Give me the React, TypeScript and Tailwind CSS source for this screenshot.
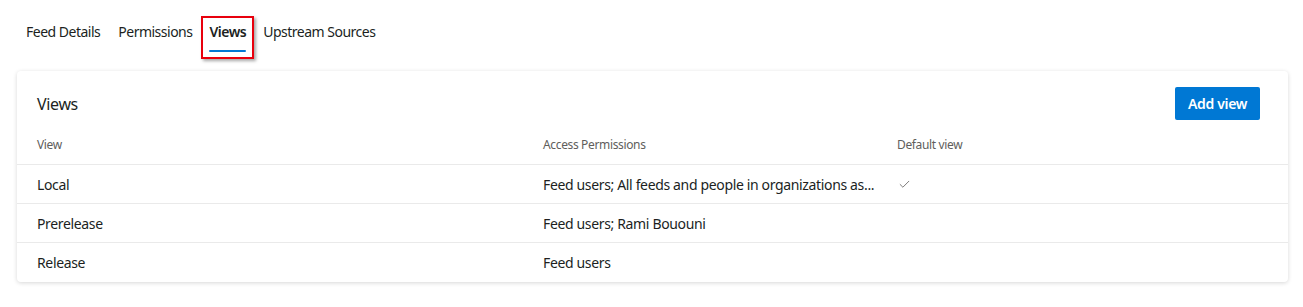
import { Check } from "lucide-react";

type Row = {
  name: string;
  access: string;
  isDefault: boolean;
};

const rows: Row[] = [
  {
    name: "Local",
    access: "Feed users; All feeds and people in organizations as...",
    isDefault: true,
  },
  { name: "Prerelease", access: "Feed users; Rami Bououni", isDefault: false },
  { name: "Release", access: "Feed users", isDefault: false },
];

const tabs = ["Feed Details", "Permissions", "Views", "Upstream Sources"];

export default function App() {
  return (
    <div className="w-[1303px] h-[307px] bg-white text-[#201f1e] font-['Segoe_UI','Noto_Sans',sans-serif] tracking-[-0.35px] antialiased">
      {/* TABS */}
      <div className="flex items-start pl-[26px] pt-[22px] h-[71px] tracking-[-0.5px]">
        {tabs.map((tab) => {
          const isActive = tab === "Views";
          return isActive ? (
            <div
              key={tab}
              className="mr-[9px] -ml-[9px] -mt-[6px] px-[6px] pt-[4px] pb-[5px] border-2 border-[#e8000d] shadow-[2px_2px_3px_rgba(0,0,0,0.35)]"
            >
              <div className="text-[14px] font-semibold leading-[20px]">{tab}</div>
              <div className="mt-[8px] h-[2px] bg-[#0078d4] rounded-full" />
            </div>
          ) : (
            <div key={tab} className="mr-[18px] text-[14px] leading-[20px]">
              {tab}
            </div>
          );
        })}
      </div>

      {/* CARD */}
      <div className="mx-[17px] w-[1271px] bg-white rounded-[4px] shadow-[0_1px_4px_rgba(0,0,0,0.16)]">
        <div className="flex items-center justify-between pl-[20px] pr-[28px] pt-[16px]">
          <h2 className="text-[16px] leading-[32px]">Views</h2>
          <button className="h-[33px] w-[85px] rounded-[2px] bg-[#0078d4] text-white text-[14px] font-semibold">
            Add view
          </button>
        </div>

        {/* TABLE HEADER */}
        <div className="flex items-center h-[45px] pt-[5px] text-[12px] text-[#605e5c] border-b border-[#eaeaea]">
          <div className="w-[526px] pl-[20px]">View</div>
          <div className="w-[354px]">Access Permissions</div>
          <div>Default view</div>
        </div>

        {/* ROWS */}
        {rows.map((row, i) => (
          <div
            key={row.name}
            className={`flex items-center h-[39px] text-[14px] ${
              i < rows.length - 1 ? "border-b border-[#eaeaea]" : ""
            }`}
          >
            <div className="w-[526px] pl-[20px]">{row.name}</div>
            <div className="w-[354px] whitespace-nowrap">{row.access}</div>
            <div className="pl-[1px]">
              {row.isDefault && (
                <Check size={13} strokeWidth={1.5} className="text-[#605e5c]" />
              )}
            </div>
          </div>
        ))}
      </div>
    </div>
  );
}
